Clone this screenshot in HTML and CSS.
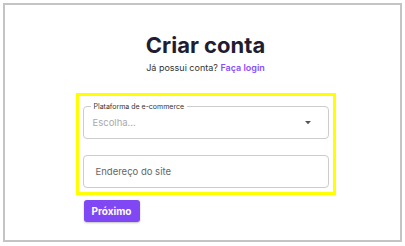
FILE: index.html
```html
<!DOCTYPE html>
<html lang="pt-BR">
<head>
<meta charset="utf-8">
<link rel="stylesheet" href="styles.css">
</head>
<body>
<div class="frame">
  <div class="column">
    <h1 class="title">Criar conta</h1>
    <p class="subtitle">Já possui conta? <a class="link" href="#">Faça login</a></p>
    <div class="highlight">
      <div class="field select">
        <span class="label">Plataforma de e-commerce</span>
        <span class="placeholder muted">Escolha...</span>
        <svg class="caret" width="6" height="4" viewBox="0 0 6 4"><path d="M0 0h6L3 3.2z" fill="#555"/></svg>
      </div>
      <div class="field">
        <span class="placeholder">Endereço do site</span>
      </div>
    </div>
    <button class="btn">Próximo</button>
  </div>
</div>
</body>
</html>
```
FILE: styles.css
```css
html, body { margin: 0; padding: 0; background: #fff; }
body { font-family: Inter, "Noto Sans", sans-serif; }
.frame {
  margin: 3px 3px 4px 3px;
  height: 235px;
  border: 2px solid #c4c4c4;
  display: flex;
  justify-content: center;
}
.column {
  width: 260px;
  margin-left: 6px;
  display: flex;
  flex-direction: column;
  padding-top: 26px;
}
.title {
  margin: 0;
  text-align: center;
  font-size: 22px;
  line-height: 28px;
  font-weight: 700;
  color: #221c33;
}
.subtitle {
  margin: 3px 0 0 0;
  text-align: center;
  font-size: 9px;
  line-height: 12px;
  color: #333;
}
.link { color: #8a4cff; font-weight: 600; text-decoration: none; }
.highlight {
  margin-top: 19px;
  border: 3px solid #ffff00;
  padding: 10px 4px 4px 4px;
  display: flex;
  flex-direction: column;
  gap: 16px;
}
.field {
  position: relative;
  height: 31px;
  border: 1px solid #cccccc;
  border-radius: 4px;
  display: flex;
  align-items: center;
  padding: 0 12px;
}
.select { padding: 0 9px; }
.label {
  position: absolute;
  left: 7px;
  top: -5px;
  padding: 0 3px;
  background: #fff;
  font-size: 7px;
  line-height: 9px;
  color: #333;
}
.placeholder { font-size: 9.5px; color: #666; flex: 1; }
.placeholder.muted { color: #aaa; }
.caret { margin-right: 8px; }
.btn {
  align-self: flex-start;
  margin: 5px 0 0 8px;
  width: 56px;
  height: 22px;
  border: none;
  border-radius: 3px;
  background: #8047f5;
  color: #fff;
  font-family: Inter, sans-serif;
  font-weight: 700;
  font-size: 10px;
  box-shadow: 0 1px 2px rgba(0,0,0,0.25);
  padding: 0;
}
```
